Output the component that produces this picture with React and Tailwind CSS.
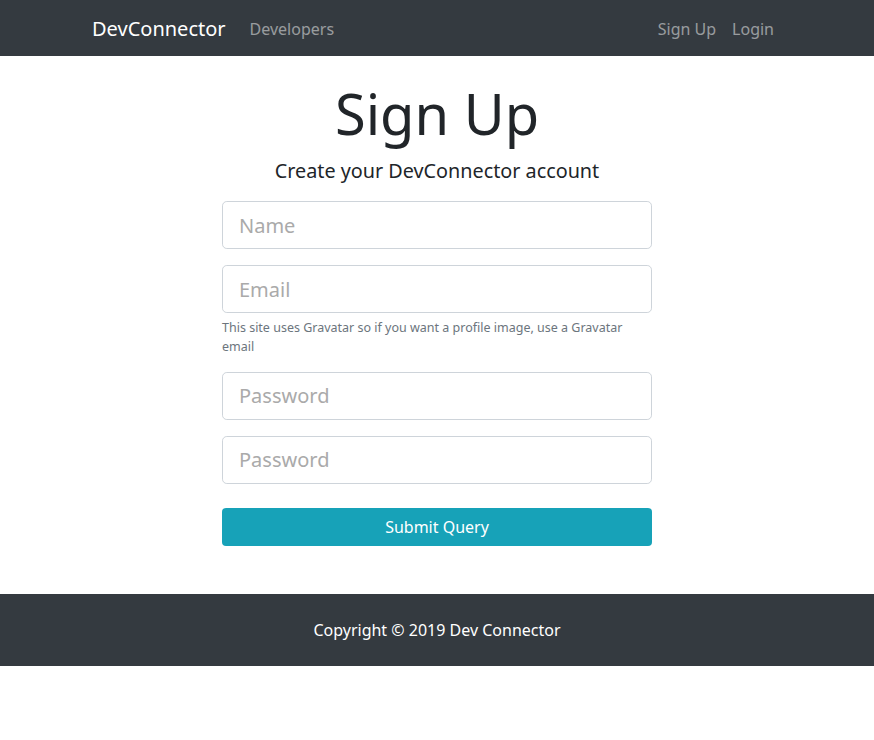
export default function App() {
  return (
    <div className="min-h-screen bg-white text-[#212529] font-['Noto_Sans',sans-serif]">
      {/* Navbar */}
      <nav className="bg-[#343a40] h-14 px-4">
        <div className="mx-auto max-w-[720px] px-[15px] h-full flex items-center pt-0.5">
          <a className="text-white text-[20px] mr-4 leading-[30px]">DevConnector</a>
          <ul className="flex flex-1 items-center">
            <li>
              <a className="px-2 text-white/50 text-base">Developers</a>
            </li>
          </ul>
          <ul className="flex items-center">
            <li>
              <a className="px-2 text-white/50 text-base">Sign Up</a>
            </li>
            <li>
              <a className="px-2 text-white/50 text-base">Login</a>
            </li>
          </ul>
        </div>
      </nav>

      {/* Register */}
      <div className="pt-6">
        <div className="w-[430px] mx-auto">
          <h1 className="text-[56px] leading-[1.2] font-normal text-center mb-[9px]">Sign Up</h1>
          <p className="text-[19.8px] leading-[30px] font-normal text-center mb-[15px]">
            Create your DevConnector account
          </p>
          <form className="flex flex-col">
            <div className="mb-4">
              <input
                type="text"
                placeholder="Name"
                className="w-full h-12 px-4 text-[20px] border border-[#ced4da] rounded-[4.8px] placeholder:text-[#aaaaaa] outline-none"
              />
            </div>
            <div className="mb-[15px]">
              <input
                type="email"
                placeholder="Email"
                className="w-full h-12 px-4 text-[20px] border border-[#ced4da] rounded-[4.8px] placeholder:text-[#aaaaaa] outline-none"
              />
              <small className="block mt-[5px] text-[12.5px] leading-[19.2px] text-[#6c757d]">
                This site uses Gravatar so if you want a profile image, use a Gravatar email
              </small>
            </div>
            <div className="mb-4">
              <input
                type="password"
                placeholder="Password"
                className="w-full h-12 px-4 text-[20px] border border-[#ced4da] rounded-[4.8px] placeholder:text-[#aaaaaa] outline-none"
              />
            </div>
            <div className="mb-4">
              <input
                type="password"
                placeholder="Password"
                className="w-full h-12 px-4 text-[20px] border border-[#ced4da] rounded-[4.8px] placeholder:text-[#aaaaaa] outline-none"
              />
            </div>
            <button
              type="button"
              className="mt-2 h-[38px] w-full bg-[#17a2b8] text-white text-base rounded"
            >
              Submit Query
            </button>
          </form>
        </div>
      </div>

      {/* Footer */}
      <footer className="bg-[#343a40] mt-12 p-6 text-center text-white text-base leading-6">
        Copyright © 2019 Dev Connector
      </footer>
    </div>
  );
}
